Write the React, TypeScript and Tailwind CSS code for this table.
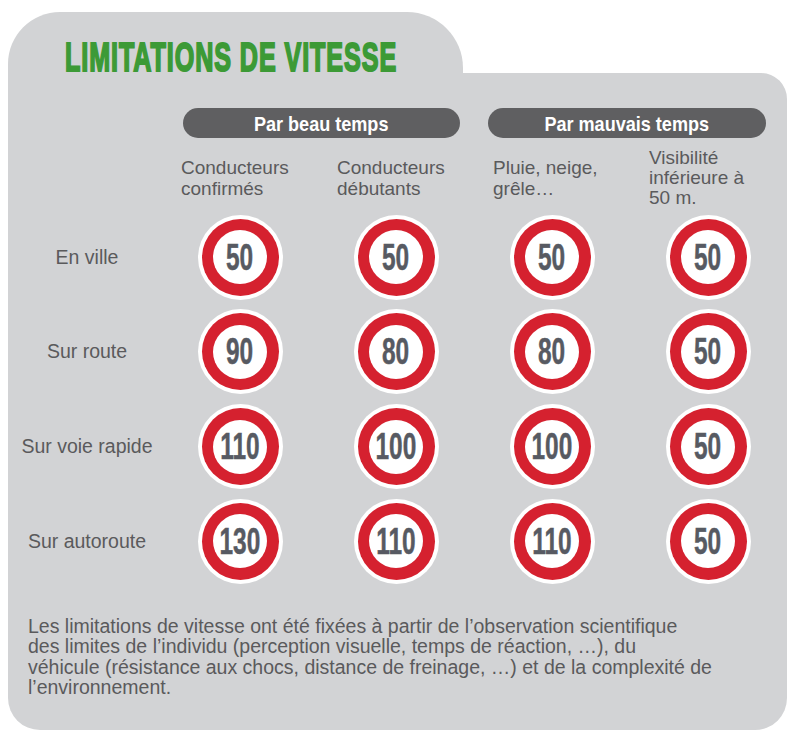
import React from "react";

const rows: [string, number[]][] = [
  ["En ville", [50, 50, 50, 50]],
  ["Sur route", [90, 80, 80, 50]],
  ["Sur voie rapide", [110, 100, 100, 50]],
  ["Sur autoroute", [130, 110, 110, 50]],
];

function Sign({ n }: { n: number }) {
  return (
    <div className="w-[85px] h-[85px] rounded-full bg-white p-[4px] shrink-0">
      <div className="w-full h-full rounded-full bg-[#d5212f] p-[11.5px]">
        <div className="w-full h-full rounded-full bg-white flex items-center justify-center">
          <span className="block font-bold text-[37px] leading-none scale-x-[0.66] text-[#575a62] [-webkit-text-stroke:0.5px_#575a62]">
            {n}
          </span>
        </div>
      </div>
    </div>
  );
}

export default function App() {
  return (
    <div className="w-[804px] h-[741px] bg-white pt-[12px] pl-[8px] font-['Liberation_Sans',Arial,sans-serif]">
      <div className="w-[455px] h-[61px] bg-[#d2d3d5] rounded-tl-[52px] rounded-tr-[56px] pt-[25px] pl-[57px] overflow-visible">
        <div className="block whitespace-nowrap origin-left scale-x-[0.613] font-bold text-[41px] leading-none tracking-[1.5px] text-[#3c9a36] [-webkit-text-stroke:2px_#3c9a36]">
          LIMITATIONS DE VITESSE
        </div>
      </div>
      <div className="w-[779px] h-[657px] bg-[#d2d3d5] rounded-tr-[26px] rounded-b-[32px] pt-[35px]">
        <div className="flex pl-[175px] gap-[28px]">
          <div className="w-[277px] h-[30px] rounded-full bg-[#5f5f61] flex items-center justify-center">
            <span className="block whitespace-nowrap font-bold text-[21px] leading-none text-white scale-x-[0.86]">
              Par beau temps
            </span>
          </div>
          <div className="w-[278px] h-[30px] rounded-full bg-[#5f5f61] flex items-center justify-center">
            <span className="block whitespace-nowrap font-bold text-[21px] leading-none text-white scale-x-[0.86]">
              Par mauvais temps
            </span>
          </div>
        </div>

        <div className="grid grid-cols-[173px_156px_156px_156px_138px] mt-[8px] h-[64px] items-center text-[19px] text-[#5a5a5c]">
          <div />
          <div className="leading-[21px]">
            Conducteurs
            <br />
            confirmés
          </div>
          <div className="leading-[21px]">
            Conducteurs
            <br />
            débutants
          </div>
          <div className="leading-[21px]">
            Pluie, neige,
            <br />
            grêle…
          </div>
          <div className="leading-[20px]">
            Visibilité
            <br />
            inférieure à
            <br />
            50 m.
          </div>
        </div>

        <div className="flex flex-col">
          {rows.map(([label, vals]) => (
            <div
              key={label}
              className="grid grid-cols-[173px_156px_156px_156px_138px] h-[94.67px] items-center"
            >
              <div className="pr-[15px] text-center text-[19.5px] leading-none text-[#5a5a5c] whitespace-nowrap">
                {label}
              </div>
              {vals.map((v, i) => (
                <div key={i} className="flex items-center pl-[16.5px]">
                  <Sign n={v} />
                </div>
              ))}
            </div>
          ))}
        </div>

        <p className="mt-[27px] pl-[20px] text-[19.5px] leading-[20.5px] text-[#5a5a5c] whitespace-nowrap">
          Les limitations de vitesse ont été fixées à partir de l’observation scientifique
          <br />
          des limites de l’individu (perception visuelle, temps de réaction, …), du
          <br />
          véhicule (résistance aux chocs, distance de freinage, …) et de la complexité de
          <br />
          l’environnement.
        </p>
      </div>
    </div>
  );
}
